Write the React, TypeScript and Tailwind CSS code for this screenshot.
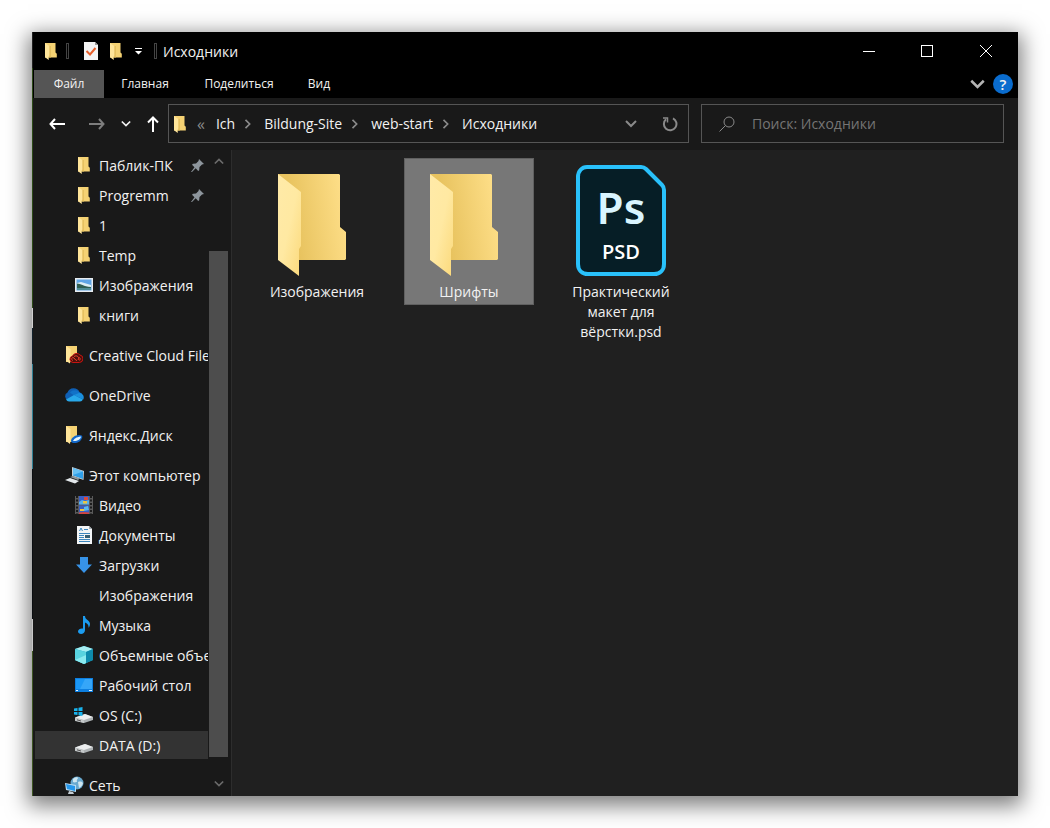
import type { ReactNode } from 'react'

function SmallFolder() {
  return (
    <svg width="14" height="18" viewBox="0 0 14 18" aria-hidden="true">
      <path d="M1 1h10.500v9.500l1.300 1.300V15.500H1z" fill="#f5d273" />
      <path d="M5 4v11.500h2V4z" fill="#e6c160" />
      <path d="M1 1l4.300 3v9.500l-.6.800V18L1 15.300z" fill="#ffe59a" />
    </svg>
  )
}

function BigFolder({ id }: { id: string }) {
  return (
    <svg width="68" height="102" viewBox="0 0 68 102" aria-hidden="true">
      <defs>
        <linearGradient id={id + 'b'} x1="0" y1="0.400" x2="1" y2="0.200">
          <stop offset="0.200" stopColor="#e8c35f" />
          <stop offset="1" stopColor="#ffe08a" />
        </linearGradient>
        <linearGradient id={id + 'f'} x1="0" y1="0" x2="1" y2="1">
          <stop offset="0" stopColor="#ffeaa8" />
          <stop offset="0.500" stopColor="#ffe9a2" />
          <stop offset="1" stopColor="#fbd97b" />
        </linearGradient>
      </defs>
      <path d="M0 0h61l1 1v52l6 5v27l-1 1H0z" fill={`url(#${id}b)`} />
      <path d="M0 0l23 18v54l-2 3v27L0 86z" fill={`url(#${id}f)`} />
    </svg>
  )
}

function Pin() {
  return (
    <svg width="13" height="13" viewBox="0 0 13 13" aria-hidden="true">
      <path d="M8 0l5 5-2 .5-2.500 2.500-.3 3.200-1 .8-2.500-2.700L1 13l-1-.1L3.500 8.200 1 5.700l1-1 3-.2L7.500 2z" fill="#8d959c" />
    </svg>
  )
}

function PictureIcon() {
  return (
    <svg width="18" height="14" viewBox="0 0 18 14" aria-hidden="true">
      <path d="M0 0h18v14H0z" fill="#e9edf0" />
      <path d="M1.500 1.500h15v11h-15z" fill="#5fa5e6" />
      <path d="M2 5l4-1 10 3v2H2z" fill="#dceef5" />
      <path d="M2 5.500c4 0 6 3 14 3.500v1H2z" fill="#2f5e52" />
      <path d="M2 10h14v2H2z" fill="#4f8d96" />
    </svg>
  )
}

function CreativeCloudIcon() {
  return (
    <svg width="18" height="18" viewBox="0 0 18 18" aria-hidden="true">
      <path d="M1 0h11v12l-4 4H1z" fill="#f5d273" />
      <path d="M1 0l4.500 3v11l-.5 3.500-4-2.500z" fill="#ffe59a" />
      <path d="M8 16.500a3.300 3.300 0 0 1-.5-6.500 4.500 4.500 0 0 1 7.500-1 3.800 3.800 0 0 1-.5 7.500z" fill="#4a100c" stroke="#c81410" />
      <path d="M8 14.500c-2-.5-1.500-3 0-3s2 3 4 3M9 10.500c3-2 6 1 4 3.500M14 14.500c2-1 1-3 0-3" fill="none" stroke="#f0412c" />
    </svg>
  )
}

function OneDriveIcon() {
  return (
    <svg width="20" height="14" viewBox="0 0 20 14" aria-hidden="true">
      <path d="M4 12a4 4 0 0 1-.5-7.500A6.500 6.500 0 0 1 15.500 4 5 5 0 0 1 16 13H5z" fill="#0f5fb4" />
      <path d="M6 4.500a6 6 0 0 1 9.500 0L18 6l-6 3z" fill="#1272c8" />
      <path d="M2 11.500L10 7l9 4.500A4 4 0 0 1 16 13.500H5a4 4 0 0 1-3-2z" fill="#28a8ea" />
      <path d="M10 7l5-2a4.500 4.500 0 0 1 4.300 6.500z" fill="#1b8fdc" />
    </svg>
  )
}

function YandexIcon() {
  return (
    <svg width="18" height="18" viewBox="0 0 18 18" aria-hidden="true">
      <path d="M1 0h11v12l-4 4H1z" fill="#f5d273" />
      <path d="M1 0l4.500 3v11l-.5 4-4-3z" fill="#ffe59a" />
      <path d="M6 15c0-3 4-6 8-6 3 0 4 1 3 3-1 3-4 5-7.500 5C7.500 17 6 16.500 6 15z" fill="#1267c9" />
      <path d="M8 15c1-2 3-4 8-4.500 0 2.500-4 5-8 4.500z" fill="#e4f4ff" />
    </svg>
  )
}

function ComputerIcon() {
  return (
    <svg width="19" height="17" viewBox="0 0 19 17" aria-hidden="true">
      <path d="M7 0l12 4-.5 9L7 9z" fill="#c8d2d8" />
      <path d="M8 1l10 3.500V12L8 8.500z" fill="#2f9fe8" />
      <path d="M8 1l10 3.500L8 8z" fill="#67c1f5" />
      <path d="M5 10l3-1 7 2.500-2 1.500z" fill="#8e989e" />
      <path d="M0 13l5-2 9 3-4 2.500z" fill="#e3e8eb" />
    </svg>
  )
}

function VideoIcon() {
  return (
    <svg width="18" height="18" viewBox="0 0 18 18" aria-hidden="true">
      <path d="M0 0h18v18H0z" fill="#5a5a5a" />
      <path d="M2 0v18M16 0v18" stroke="#1c1c1c" strokeWidth="2" strokeDasharray="2 1.500" />
      <path d="M4 0h10v8.500H4zM4 9.500h10V18H4z" fill="#3a5fc4" />
      <path d="M4 6l3-2 3 1 4-1v4.500H4z" fill="#58b4e8" />
      <path d="M9 1h4v3H9z" fill="#d94a3c" />
      <path d="M8 5h4v2.500H8zM5 13h4v2H5z" fill="#ecc540" />
      <path d="M9 11l4-1 1 4-5 1z" fill="#59b9ee" />
      <path d="M4 16.500l5-.5 5 .5V18H4z" fill="#d2453f" />
    </svg>
  )
}

function DocumentIcon() {
  return (
    <svg width="15" height="18" viewBox="0 0 15 18" aria-hidden="true">
      <path d="M0 0h12l3 3v15H0z" fill="#f3f5f6" />
      <path d="M12 0l3 3h-3z" fill="#a5adb2" />
      <path d="M2.500 5L4 2l1.500 3M7 3.500h4M2 7.500h11M2 9.500h5M2 11.500h5M2 13.500h11M2 15.500h11" stroke="#3c86bd" fill="none" />
      <path d="M8 9h5v3H8z" fill="#365f74" />
    </svg>
  )
}

function DownloadIcon() {
  return (
    <svg width="16" height="16" viewBox="0 0 16 16" aria-hidden="true">
      <path d="M4 0h8v7.500h4L8 16 0 7.500h4z" fill="#3793e8" />
    </svg>
  )
}

function MusicIcon() {
  return (
    <svg width="12" height="18" viewBox="0 0 12 18" aria-hidden="true">
      <path d="M5 0h2c0 4 5 4 5 8 0 2-1 3-1.500 4 .5-3-1-4.500-3.500-5.500V14c0 5-7 5-7 1.500C0 13 3 12 5 12.500z" fill="#1c9cf0" />
    </svg>
  )
}

function CubeIcon() {
  return (
    <svg width="18" height="18" viewBox="0 0 18 18" aria-hidden="true">
      <path d="M9 0l9 3v11l-9 4-9-4V3z" fill="#22a8c4" />
      <path d="M9 0l9 3-7 3L0 3z" fill="#a6eef2" />
      <path d="M0 3l11 3v11L9 18l-9-4z" fill="#59d3df" />
      <path d="M0 14l11-5v8l-2 1z" fill="#8beaf0" />
      <path d="M11 6l7-3v11l-7 3z" fill="#0e8aac" />
    </svg>
  )
}

function DesktopIcon() {
  return (
    <svg width="18" height="14" viewBox="0 0 18 14" aria-hidden="true">
      <path d="M0 0h18v14H0z" fill="#0d7fe0" />
      <path d="M1 1h16v10H1z" fill="#1b97f5" />
      <path d="M10 1h7v10H5z" fill="#36a6f8" />
      <path d="M1 12.500h2M14 12.500h3" stroke="#e8f4ff" />
    </svg>
  )
}

function DriveIcon({ windows = false }: { windows?: boolean }) {
  return (
    <svg width="20" height="16" viewBox="0 0 20 16" aria-hidden="true">
      <path d="M1 10.500L11 7l8 3v3l-9 3-9-2z" fill="#aeb3b5" />
      <path d="M1 10.500L11 7l8 3-9 3z" fill="#eceeef" />
      <path d="M1 11l9 2.500V16l-9-2.500z" fill="#c6cacb" />
      <path d="M3 12.800l4 1.200" stroke="#555" />
      {windows && (
        <path d="M0 1.500L3.500 1v3H0zM4.500.8L8.500 0v4h-4zM0 5h3.500v3L0 7.500zM4.500 5h4v4l-4-.8z" fill="#18b4ee" />
      )}
    </svg>
  )
}

function NetworkIcon() {
  return (
    <svg width="19" height="18" viewBox="0 0 19 18" aria-hidden="true">
      <circle cx="12" cy="7" r="6.500" fill="#69a9cf" />
      <path d="M8 3c2-2 5-2 5-1s-2 2-1 3-3 2-4 1zM13 6c3-1 4 0 5 1-1 3-2 4-4 5z" fill="#cfe6f0" />
      <path d="M0 7l11 2v7L1 14z" fill="#b9dcf2" />
      <path d="M1 8l9 2v5l-8-2z" fill="#2597ec" />
      <path d="M4 15l4 1 1 2H3z" fill="#c5ced4" />
    </svg>
  )
}

function PsdIcon() {
  return (
    <svg width="90" height="111" viewBox="0 0 90 111" aria-label="PSD">
      <path d="M11 2h54c2 0 4 1 5 2l16 16c1.500 1.500 2 3 2 5v74c0 6-4 10-10 10H12c-6 0-10-4-10-10V12C2 6 6 2 11 2z" fill="#061e26" stroke="#29c1fb" strokeWidth="4" />
      <text x="45" y="59" textAnchor="middle" fontSize="44" fontWeight="600" fill="#d9f5ff" className="font-['Noto_Sans',sans-serif]">
        Ps
      </text>
      <text x="45" y="94" textAnchor="middle" fontSize="20" fontWeight="600" fill="#ffffff" className="font-['Open_Sans',sans-serif]">
        PSD
      </text>
    </svg>
  )
}

function Chevron({ size = 11, className = '' }: { size?: number; className?: string }) {
  return (
    <svg width={size} height={size} viewBox="0 0 12 12" fill="none" stroke="currentColor" strokeWidth="2" className={className} aria-hidden="true">
      <path d="M1 3l5 5 5-5" />
    </svg>
  )
}

type Item = { label: string; icon: ReactNode; pinned?: boolean; root?: boolean; selected?: boolean }

const groups: Item[][] = [
  [
    { label: 'Паблик-ПК', icon: <SmallFolder />, pinned: true },
    { label: 'Progremm', icon: <SmallFolder />, pinned: true },
    { label: '1', icon: <SmallFolder /> },
    { label: 'Temp', icon: <SmallFolder /> },
    { label: 'Изображения', icon: <PictureIcon /> },
    { label: 'книги', icon: <SmallFolder /> },
  ],
  [{ label: 'Creative Cloud Files', icon: <CreativeCloudIcon />, root: true }],
  [{ label: 'OneDrive', icon: <OneDriveIcon />, root: true }],
  [{ label: 'Яндекс.Диск', icon: <YandexIcon />, root: true }],
  [
    { label: 'Этот компьютер', icon: <ComputerIcon />, root: true },
    { label: 'Видео', icon: <VideoIcon /> },
    { label: 'Документы', icon: <DocumentIcon /> },
    { label: 'Загрузки', icon: <DownloadIcon /> },
    { label: 'Изображения', icon: null },
    { label: 'Музыка', icon: <MusicIcon /> },
    { label: 'Объемные объекты', icon: <CubeIcon /> },
    { label: 'Рабочий стол', icon: <DesktopIcon /> },
    { label: 'OS (C:)', icon: <DriveIcon windows /> },
    { label: 'DATA (D:)', icon: <DriveIcon />, selected: true },
  ],
  [{ label: 'Сеть', icon: <NetworkIcon />, root: true }],
]

function TreeRow({ item }: { item: Item }) {
  return (
    <li className="py-px pl-0.5 pr-px">
      <button
        className={`flex h-7 w-full items-center overflow-hidden whitespace-nowrap text-left ${item.root ? 'pl-7' : 'pl-[38px]'} ${item.selected ? 'bg-[#333333]' : ''}`}
      >
        <span className="flex w-[22px] shrink-0 justify-center">{item.icon}</span>
        <span className="ml-1 flex-1">{item.label}</span>
        {item.pinned && (
          <span className="mr-1">
            <Pin />
          </span>
        )}
      </button>
    </li>
  )
}

function TitleBar() {
  return (
    <header className="flex h-[38px] shrink-0 items-center bg-black pl-[11px]">
      <SmallFolder />
      <span className="ml-2 h-4 w-[3px] border border-[#444]" />
      <button aria-label="Свойства" className="ml-[15px]">
        <svg width="14" height="18" viewBox="0 0 14 18" aria-hidden="true">
          <path d="M0 0h11l3 3v15H0z" fill="#f4f4f4" />
          <path d="M11 0l3 3h-3z" fill="#9a9a9a" />
          <path d="M2.500 9l3.500 3.500L11.500 6" fill="none" stroke="#e8602c" strokeWidth="2" />
        </svg>
      </button>
      <button aria-label="Новая папка" className="ml-[11px]">
        <SmallFolder />
      </button>
      <button aria-label="Настройка панели" className="ml-3">
        <svg width="7" height="7" viewBox="0 0 7 7" fill="#fff" aria-hidden="true">
          <path d="M0 0h7v1H0zM0 3h7L3.500 6.500z" />
        </svg>
      </button>
      <span className="ml-3 h-4 w-[3px] border border-[#444]" />
      <h1 className="ml-1.5 flex-1">Исходники</h1>
      <button aria-label="Свернуть" className="flex h-full w-[58px] items-center justify-center">
        <span className="h-px w-3 bg-white" />
      </button>
      <button aria-label="Развернуть" className="flex h-full w-[58px] items-center justify-center">
        <span className="size-3 border border-white" />
      </button>
      <button aria-label="Закрыть" className="mr-0.5 flex h-full w-[60px] items-center justify-center">
        <svg width="12" height="12" viewBox="0 0 12 12" stroke="#fff" aria-hidden="true">
          <path d="M0 0l12 12M12 0L0 12" />
        </svg>
      </button>
    </header>
  )
}

function Tabs() {
  return (
    <nav className="flex h-7 shrink-0 items-center bg-black pl-px text-[12px]">
      <button className="h-full w-[70px] bg-[#555555]">Файл</button>
      <button className="h-full w-[82px]">Главная</button>
      <button className="h-full w-[106px]">Поделиться</button>
      <button className="h-full w-[54px]">Вид</button>
      <button aria-label="Развернуть ленту" className="ml-auto text-[#b4b4b4]">
        <Chevron size={15} />
      </button>
      <button aria-label="Справка" className="ml-2 mr-[5px] size-5 rounded-full bg-[#0a6cce] text-[15px] font-semibold leading-5">
        ?
      </button>
    </nav>
  )
}

function Crumbs() {
  const path = ['Ich', 'Bildung-Site', 'web-start', 'Исходники']
  return (
    <div className="flex h-[39px] min-w-0 flex-1 items-center border border-[#555555] pl-1">
      <SmallFolder />
      <span className="ml-2.5 text-[16px] text-[#8a8a8a]">«</span>
      {path.map((part, i) => (
        <span key={part} className="flex items-center">
          {i > 0 && <Chevron size={10} className="ml-2 -rotate-90 text-[#8a8a8a]" />}
          <button className="ml-[11px]">{part}</button>
        </span>
      ))}
      <button aria-label="Предыдущие расположения" className="ml-auto text-[#8a8a8a]">
        <Chevron size={12} />
      </button>
      <button aria-label="Обновить" className="ml-[25px] mr-2.5 text-[#8a8a8a]">
        <svg width="16" height="16" viewBox="0 0 16 16" fill="none" stroke="currentColor" strokeWidth="2" aria-hidden="true">
          <path d="M11 2.300A6.300 6.300 0 1 1 4 3.200" />
          <path d="M1 2h4.500v4.500" strokeWidth="1.500" />
        </svg>
      </button>
    </div>
  )
}

function AddressRow() {
  return (
    <div className="flex h-[52px] shrink-0 items-start pr-3.5 pt-1.5">
      <div className="flex h-[39px] w-[135px] shrink-0 items-center pl-4">
        <button aria-label="Назад">
          <svg width="16" height="12" viewBox="0 0 16 12" fill="none" stroke="#fff" strokeWidth="2" aria-hidden="true">
            <path d="M6 1L1.500 6 6 11M1.500 6H16" />
          </svg>
        </button>
        <button aria-label="Вперёд" className="ml-6">
          <svg width="16" height="12" viewBox="0 0 16 12" fill="none" stroke="#7d7d7d" strokeWidth="2" aria-hidden="true">
            <path d="M10 1l4.500 5L10 11M14.500 6H0" />
          </svg>
        </button>
        <button aria-label="Последние расположения" className="ml-4">
          <Chevron size={10} />
        </button>
        <button aria-label="Вверх" className="ml-4">
          <svg width="12" height="16" viewBox="0 0 12 16" fill="none" stroke="#fff" strokeWidth="2" aria-hidden="true">
            <path d="M1 6.500l5-5 5 5M6 1.500V16" />
          </svg>
        </button>
      </div>
      <Crumbs />
      <label className="ml-3 flex h-[39px] w-[303px] items-center border border-[#555555] pl-[17px]">
        <svg width="16" height="16" viewBox="0 0 16 16" fill="none" stroke="#8a8a8a" aria-hidden="true">
          <circle cx="10" cy="6" r="5" />
          <path d="M6.500 9.500L0.500 15.500" />
        </svg>
        <input
          type="text"
          aria-label="Поиск"
          placeholder="Поиск: Исходники"
          className="ml-[17px] min-w-0 flex-1 bg-transparent outline-none placeholder:text-[#757575]"
        />
      </label>
    </div>
  )
}

function Sidebar() {
  return (
    <aside className="flex w-[199px] shrink-0 border-r border-[#2d2d2d]">
      <ul className="flex min-w-0 flex-1 flex-col gap-2.5 overflow-hidden">
        {groups.map((group, i) => (
          <li key={i}>
            <ul>
              {group.map((item) => (
                <TreeRow key={item.label} item={item} />
              ))}
            </ul>
          </li>
        ))}
      </ul>
      <div className="mr-[3px] flex w-[19px] shrink-0 flex-col items-center text-[#6b6b6b]">
        <span className="flex h-[101px] w-full justify-center pt-1.5">
          <Chevron size={10} className="rotate-180" />
        </span>
        <span className="w-full flex-1 bg-[#4d4d4d]" />
        <span className="flex h-[39px] w-full items-end justify-center pb-[7px]">
          <Chevron size={10} />
        </span>
      </div>
    </aside>
  )
}

function FileTile({ label, icon, selected }: { label: string; icon: ReactNode; selected?: boolean }) {
  return (
    <button
      className={`flex w-[130px] flex-col items-center border pb-0.5 text-center leading-5 ${selected ? 'border-[#606060] bg-[#777777]' : 'border-transparent'}`}
    >
      <span className="flex h-[123px] items-center">{icon}</span>
      <span className="w-[110px]">{label}</span>
    </button>
  )
}

function FolderTile({ id, label, selected }: { id: string; label: string; selected?: boolean }) {
  return (
    <FileTile
      label={label}
      selected={selected}
      icon={
        <span className="pr-2.5 pt-2">
          <BigFolder id={id} />
        </span>
      }
    />
  )
}

export default function App() {
  return (
    <div className="flex h-screen flex-col bg-white p-8 font-['Open_Sans','Noto_Sans',sans-serif] text-[14px] text-[#f2f2f2]">
      <div className="flex min-h-0 flex-1 bg-[#191919] shadow-[0_6px_20px_4px_rgba(0,0,0,0.5)]">
        <div className="flex w-px shrink-0 flex-col">
          <span className="h-9 bg-[#222]" />
          <span className="h-60 bg-[#2c4a17]" />
          <span className="h-5 bg-[#d0d0d0]" />
          <span className="h-9 bg-[#12212b]" />
          <span className="h-[105px] bg-[#2f7f93]" />
          <span className="h-[150px] bg-[#0c0f12]" />
          <span className="h-8 bg-[#c8c8c8]" />
          <span className="flex-1 bg-[#3d5522]" />
        </div>
        <div className="flex min-w-0 flex-1 flex-col">
          <TitleBar />
          <Tabs />
          <AddressRow />
          <div className="flex min-h-0 flex-1">
            <Sidebar />
            <main className="flex flex-1 flex-wrap content-start items-start gap-[22px] bg-[#202020] pl-5 pt-2">
              <FolderTile id="images" label="Изображения" />
              <FolderTile id="fonts" label="Шрифты" selected />
              <FileTile label="Практический макет для вёрстки.psd" icon={<PsdIcon />} />
            </main>
          </div>
        </div>
      </div>
    </div>
  )
}
